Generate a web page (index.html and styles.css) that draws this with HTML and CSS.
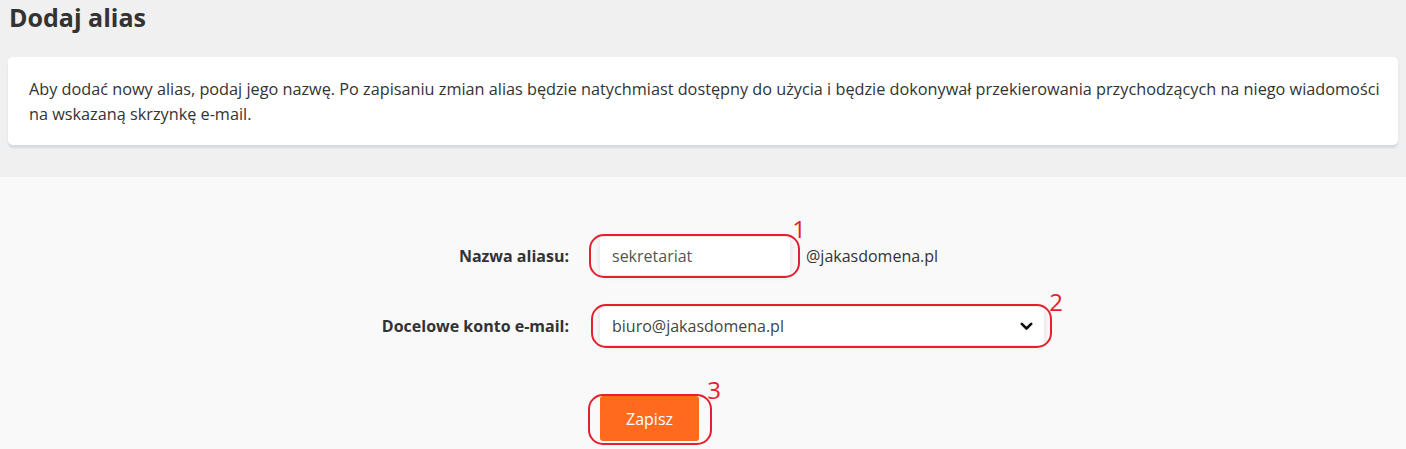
FILE: index.html
```html
<!DOCTYPE html>
<html lang="pl">
<head>
    <meta charset="UTF-8">
    <meta name="viewport" content="width=device-width, initial-scale=1.0">
    <title>Dodaj alias</title>
    <link rel="stylesheet" href="styles.css">
</head>
<body>
    <div class="top">
        <h1>Dodaj alias</h1>
        <div class="card">
            Aby dodać nowy alias, podaj jego nazwę. Po zapisaniu zmian alias będzie natychmiast dostępny do użycia i będzie dokonywał przekierowania przychodzących na niego wiadomości na wskazaną skrzynkę e-mail.
        </div>
    </div>

    <div class="form-area">
        <form class="form" onsubmit="return false">
            <label class="label" for="alias">Nazwa aliasu:</label>
            <div class="field">
                <div class="marked">
                    <input type="text" id="alias" class="input" value="sekretariat">
                    <span class="ring ring-input"></span>
                    <span class="num num-1">1</span>
                </div>
                <span class="domain">@jakasdomena.pl</span>
            </div>

            <label class="label" for="target">Docelowe konto e-mail:</label>
            <div class="field">
                <div class="marked">
                    <div class="select" id="target">
                        <span>biuro@jakasdomena.pl</span>
                        <svg class="chevron" width="13" height="9" viewBox="0 0 13 9">
                            <path d="M1.8 1.8 L6.5 6.5 L11.2 1.8" fill="none" stroke="#111" stroke-width="2.6" stroke-linecap="round" stroke-linejoin="round"/>
                        </svg>
                    </div>
                    <span class="ring ring-select"></span>
                    <span class="num num-2">2</span>
                </div>
            </div>

            <div></div>
            <div class="field submit-row">
                <div class="marked">
                    <button class="save-btn" type="submit">Zapisz</button>
                    <span class="ring ring-btn"></span>
                    <span class="num num-3">3</span>
                </div>
            </div>
        </form>
    </div>
</body>
</html>
```

FILE: styles.css
```css
body {
    margin: 0;
    font-family: "Open Sans", Arial, sans-serif;
    color: #333;
    background-color: #f9f9f9;
}

.top {
    background-color: #f0f0f0;
    padding: 0 8px 32px;
}

h1 {
    margin: 0 0 23px 1px;
    font-size: 25px;
    line-height: 34px;
    font-weight: 700;
    color: #333;
}

.card {
    background-color: #fff;
    border-radius: 5px;
    padding: 20px 14px 18px 21px;
    font-size: 16.25px;
    line-height: 25px;
    color: #333;
    box-shadow: 0 3px 2px #d5dbe0;
}

.form-area {
    padding: 60px 0 20px;
}

.form {
    display: grid;
    grid-template-columns: 216px 453px;
    column-gap: 31px;
    row-gap: 32px;
    justify-content: center;
    align-items: center;
}

.label {
    text-align: right;
    font-size: 16px;
    font-weight: 700;
    color: #333;
}

.field {
    display: flex;
    align-items: center;
    gap: 16px;
}

.marked {
    position: relative;
    display: flex;
}

.input {
    width: 190px;
    height: 38px;
    box-sizing: border-box;
    border: none;
    border-radius: 4px;
    padding: 0 12px;
    font-family: "Open Sans", Arial, sans-serif;
    font-size: 16px;
    color: #555;
    background-color: #fff;
    box-shadow: 0 1px 6px rgba(0, 0, 0, 0.12);
    outline: none;
}

.domain {
    font-size: 16px;
    color: #333;
}

.select {
    width: 444px;
    height: 38px;
    box-sizing: border-box;
    border-radius: 4px;
    padding: 0 11px 0 12px;
    display: flex;
    align-items: center;
    justify-content: space-between;
    font-size: 16px;
    color: #444;
    background-color: #fff;
    box-shadow: 0 1px 6px rgba(0, 0, 0, 0.12);
}

.submit-row {
    margin-top: 19px;
}

.save-btn {
    width: 99px;
    height: 45px;
    border: none;
    border-radius: 3px;
    background-color: #ff6a1f;
    color: #fff;
    font-family: "Open Sans", Arial, sans-serif;
    font-size: 16px;
    cursor: pointer;
}

/* red annotation marks */
.ring {
    position: absolute;
    border: 2px solid #e51f2e;
    border-radius: 15px;
    pointer-events: none;
}

.ring-input {
    left: -11px;
    right: -10px;
    top: -3px;
    bottom: -3px;
}

.ring-select {
    left: -9px;
    right: -8px;
    top: -3px;
    bottom: -3px;
}

.ring-btn {
    left: -12px;
    right: -13px;
    top: -2px;
    bottom: -4px;
}

.num {
    position: absolute;
    color: #e51f2e;
    font-family: "Open Sans", Arial, sans-serif;
    font-size: 24px;
    line-height: 24px;
}

.num-1 {
    right: -16px;
    top: -20px;
}

.num-2 {
    right: -19px;
    top: -17px;
}

.num-3 {
    right: -22px;
    top: -18px;
}
```
